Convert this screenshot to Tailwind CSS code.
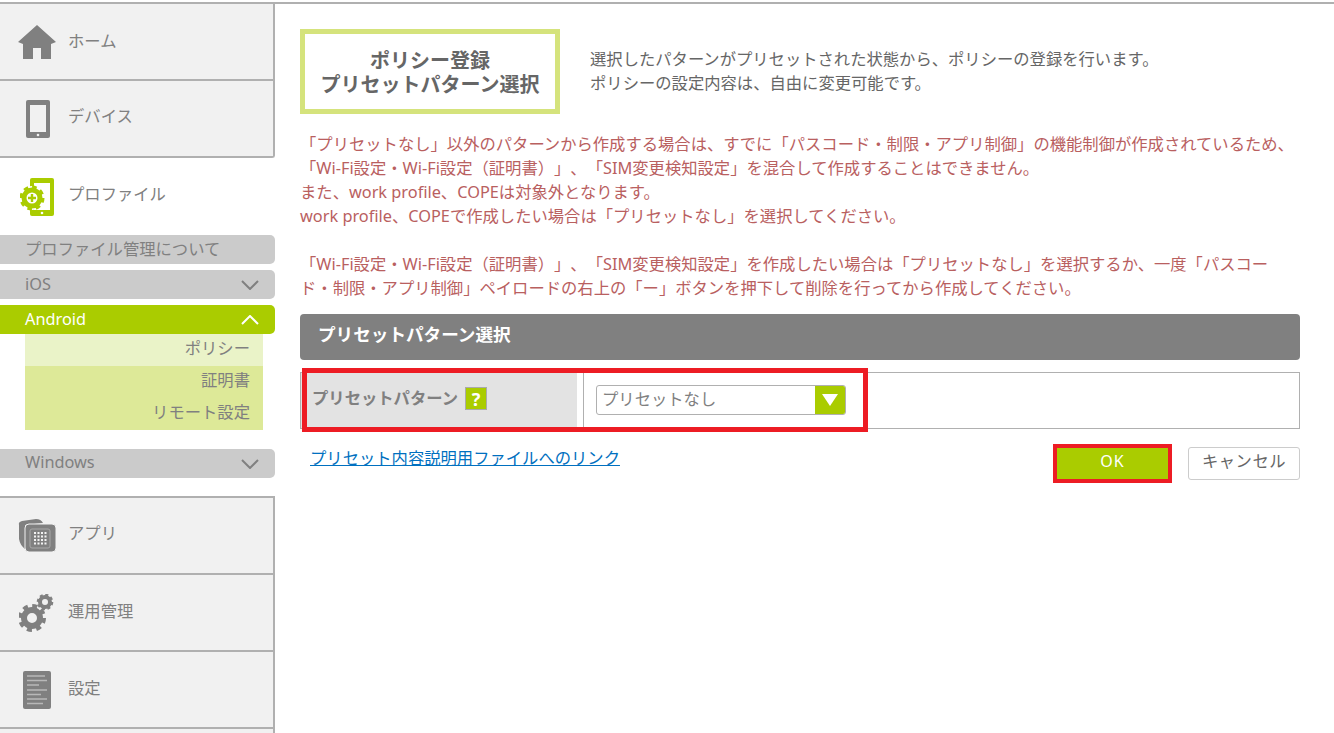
<!DOCTYPE html>
<html lang="ja">
<head>
    <meta charset="utf-8">
    <title>ポリシー登録</title>
    <script src="https://cdn.jsdelivr.net/npm/@tailwindcss/browser@4"></script>
</head>
<body class="bg-white h-[733px] overflow-hidden font-['Noto_Sans','Noto_Sans_CJK_JP',sans-serif] text-[16.32px] [text-spacing-trim:space-all] text-[#808080]">
<div class="relative h-[733px] pt-[2px]">
    <div class="flex border-t-2 border-[#b0b0b0]">

        <!-- サイドメニュー -->
        <aside class="w-[275px] shrink-0">
            <div class="bg-[#f1f1f1] border-r-2 border-b-2 border-[#b0b0b0] rounded-br-[3px]">
                <a class="flex items-center h-[77px] border-b-2 border-[#b0b0b0]">
                    <span class="w-[68px] flex justify-center pl-[5px]">
                        <svg class="w-[38px] h-[34px]" viewBox="0 0 38 34" fill="#808080"><path d="M19 0 L38 17 L33 19 L33 34 L23 34 L23 23 L15 23 L15 34 L5 34 L5 19 L0 17 Z"/></svg>
                    </span>
                    <span>ホーム</span>
                </a>
                <a class="flex items-center h-[75px]">
                    <span class="w-[68px] flex justify-center pl-[7px]">
                        <svg class="w-[24px] h-[38px]" viewBox="0 0 24 38"><rect width="24" height="38" rx="2" fill="#808080"/><rect x="4" y="5" width="16" height="27" fill="#f1f1f1"/><circle cx="12" cy="35" r="1.3" fill="#f1f1f1"/></svg>
                    </span>
                    <span class="pb-[4px]">デバイス</span>
                </a>
            </div>
            <a class="flex items-center h-[77px] pr-[2px]">
                <span class="w-[68px] flex justify-center pl-[6px]">
                    <svg class="w-[34px] h-[38px]" viewBox="0 0 34 38"><rect x="10" y="0" width="24" height="38" rx="2" fill="#aacc00"/><rect x="14" y="5" width="16" height="27" fill="#fff"/><circle cx="22" cy="35" r="1.3" fill="#fff"/><circle cx="12" cy="20" r="12" fill="#fff"/><circle cx="12" cy="20" r="8" fill="none" stroke="#aacc00" stroke-width="5"/><circle cx="12" cy="20" r="11" fill="none" stroke="#aacc00" stroke-width="3" stroke-dasharray="4.6 4"/><path d="M12 16 V24 M8 20 H16" stroke="#aacc00" stroke-width="2.4"/></svg>
                </span>
                <span class="pb-[4px]">プロファイル</span>
            </a>
            <div class="flex flex-col gap-[6px]">
                <a class="flex items-center h-[29px] pl-[25px] bg-[#cbcbcb] rounded-r-[5px]">プロファイル管理について</a>
                <a class="flex items-center justify-between h-[29px] pl-[25px] pr-[16px] bg-[#cbcbcb] rounded-r-[5px]">iOS
                    <svg class="w-[18px] h-[10px]" viewBox="0 0 18 10" fill="none" stroke="#808080" stroke-width="2"><path d="M1 1 L9 9 L17 1"/></svg>
                </a>
                <div>
                    <a class="flex items-center justify-between h-[29px] pl-[25px] pr-[16px] bg-[#aacc00] rounded-r-[5px] text-white">Android
                        <svg class="w-[18px] h-[10px]" viewBox="0 0 18 10" fill="none" stroke="#fff" stroke-width="2"><path d="M1 9 L9 1 L17 9"/></svg>
                    </a>
                    <div class="ml-[25px] w-[238px] text-right">
                        <div class="h-[32px] leading-[29px] pr-[13px] bg-[#eaf3c8]">ポリシー</div>
                        <div class="h-[32px] leading-[29px] pr-[13px] bg-[#dde998]">証明書</div>
                        <div class="h-[32px] leading-[29px] pr-[13px] bg-[#dde998]">リモート設定</div>
                    </div>
                </div>
                <a class="flex items-center justify-between h-[29px] mt-[13px] pl-[25px] pr-[16px] bg-[#cbcbcb] rounded-r-[5px]"><span class="pb-[2px]">Windows</span>
                    <svg class="w-[18px] h-[10px]" viewBox="0 0 18 10" fill="none" stroke="#808080" stroke-width="2"><path d="M1 1 L9 9 L17 1"/></svg>
                </a>
            </div>
            <div class="mt-[18px] bg-[#f1f1f1] border-t-2 border-r-2 border-[#b0b0b0] h-[240px]">
                <a class="flex items-center h-[77px] border-b-2 border-[#b0b0b0]">
                    <span class="w-[68px] flex justify-center pl-[5px]">
                        <svg class="w-[38px] h-[33px]" viewBox="0 0 38 33"><path d="M1 6 Q0 3 4 2 L18 0 Q23 0 25 4 L7 6 L7 30 Q2 26 1 20 Z" fill="#808080"/><rect x="7" y="5" width="31" height="28" rx="4" fill="#808080" stroke="#f1f1f1" stroke-width="1"/><rect x="12" y="10" width="20" height="19" rx="2" fill="none" stroke="#a8a8a8" stroke-width="1"/><path d="M16 14 H29 M16 17.500 H29 M16 21 H29 M16 24.500 H29" stroke="#f1f1f1" stroke-width="2" stroke-dasharray="2 1.500"/></svg>
                    </span>
                    <span class="pb-[4px]">アプリ</span>
                </a>
                <a class="flex items-center h-[77px] border-b-2 border-[#b0b0b0]">
                    <span class="w-[68px] flex justify-center pl-[6px]">
                        <svg class="w-[36px] h-[38px]" viewBox="0 0 36 38" fill="none"><circle cx="13" cy="24" r="8" stroke="#808080" stroke-width="6"/><circle cx="13" cy="24" r="12" stroke="#808080" stroke-width="4" stroke-dasharray="5 4.4"/><circle cx="26" cy="8" r="5" stroke="#808080" stroke-width="4"/><circle cx="26" cy="8" r="7" stroke="#808080" stroke-width="2.6" stroke-dasharray="3 2.5"/></svg>
                    </span>
                    <span class="pb-[2px]">運用管理</span>
                </a>
                <a class="flex items-center h-[77px] border-b-2 border-[#b0b0b0]">
                    <span class="w-[68px] flex justify-center pl-[5px]">
                        <svg class="w-[28px] h-[38px]" viewBox="0 0 28 38"><rect width="28" height="38" rx="2" fill="#808080"/><path d="M4 5 H22 M4 9.500 H24 M4 14 H16 M4 19 H24 M4 23.500 H18 M4 28 H24 M4 32.500 H20" stroke="#b8b8b8" stroke-width="1.300"/></svg>
                    </span>
                    <span class="pb-[2px]">設定</span>
                </a>
            </div>
        </aside>

        <!-- メイン -->
        <main class="w-[1000px] ml-[25px]">
            <div class="flex items-start mt-[25px]">
                <h1 class="w-[260px] h-[85px] border-[5px] border-[#d5e37c] flex items-center justify-center text-center text-[20px] leading-[24px] font-bold text-[#666] pt-[2px]">ポリシー登録<br>プリセットパターン選択</h1>
                <p class="ml-[30px] mt-[18px] leading-[24px] text-[#666]">選択したパターンがプリセットされた状態から、ポリシーの登録を行います。<br>ポリシーの設定内容は、自由に変更可能です。</p>
            </div>
            <div class="mt-[18px] leading-[24px] text-[#b9605f]">
                <p>「プリセットなし」以外のパターンから作成する場合は、すでに「パスコード・制限・アプリ制御」の機能制御が作成されているため、<br>「Wi-Fi設定・Wi-Fi設定（証明書）」、「SIM変更検知設定」を混合して作成することはできません。<br>また、work profile、COPEは対象外となります。<br>work profile、COPEで作成したい場合は「プリセットなし」を選択してください。</p>
                <p class="mt-[24px]">「Wi-Fi設定・Wi-Fi設定（証明書）」、「SIM変更検知設定」を作成したい場合は「プリセットなし」を選択するか、一度「パスコー<br>ド・制限・アプリ制御」ペイロードの右上の「ー」ボタンを押下して削除を行ってから作成してください。</p>
            </div>

            <h2 class="mt-[14px] h-[46px] pl-[18px] flex items-center bg-[#808080] rounded-[4px] text-white font-bold text-[17.6px] pb-[5px]">プリセットパターン選択</h2>
            <div class="mt-[12px] h-[57px] flex border border-[#b0b0b0]">
                <div class="w-[276px] bg-[#e3e3e3] flex items-center pl-[11px] font-bold pb-[4px]">プリセットパターン
                    <span class="ml-[7px] w-[22px] h-[23px] flex items-center justify-center bg-[#aacc00] border border-[#aaa] text-white text-lg font-bold">?</span>
                </div>
                <div class="ml-[6px] pl-[12px] flex items-center border-l border-[#b0b0b0] pb-[2px]">
                    <div class="w-[250px] h-[30px] flex items-center justify-between border border-[#b0b0b0] rounded-[3px] overflow-hidden pl-[5px]">
                        <span class="pb-[1px]">プリセットなし</span>
                        <span class="w-[30px] h-full bg-[#aacc00] flex items-center justify-center">
                            <svg class="w-[16px] h-[12px]" viewBox="0 0 16 12" fill="#fff"><path d="M0 0 H16 L8 12 Z"/></svg>
                        </span>
                    </div>
                </div>
            </div>
            <div class="flex justify-between mt-[18px]">
                <a class="ml-[10px] underline text-[#0070c0] leading-[24px] -mt-[1px] h-[24px]">プリセット内容説明用ファイルへのリンク</a>
                <div class="flex items-start">
                    <button class="w-[119px] h-[39px] -mt-[3px] pb-[5px] border-4 border-[#ed1c24] bg-[#aacc00] text-white text-base tracking-[1px]">OK</button>
                    <button class="ml-[16px] w-[112px] h-[33px] pb-[4px] border border-[#ccc] rounded-[3px] bg-white text-[#666] tracking-[0.5px]">キャンセル</button>
                </div>
            </div>
        </main>
    </div>
    <!-- 赤枠の注記 -->
    <div class="absolute left-[302px] top-[368px] w-[566px] h-[64px] border-[5px] border-[#ed1c24] pointer-events-none"></div>
</div>
</body>
</html>
